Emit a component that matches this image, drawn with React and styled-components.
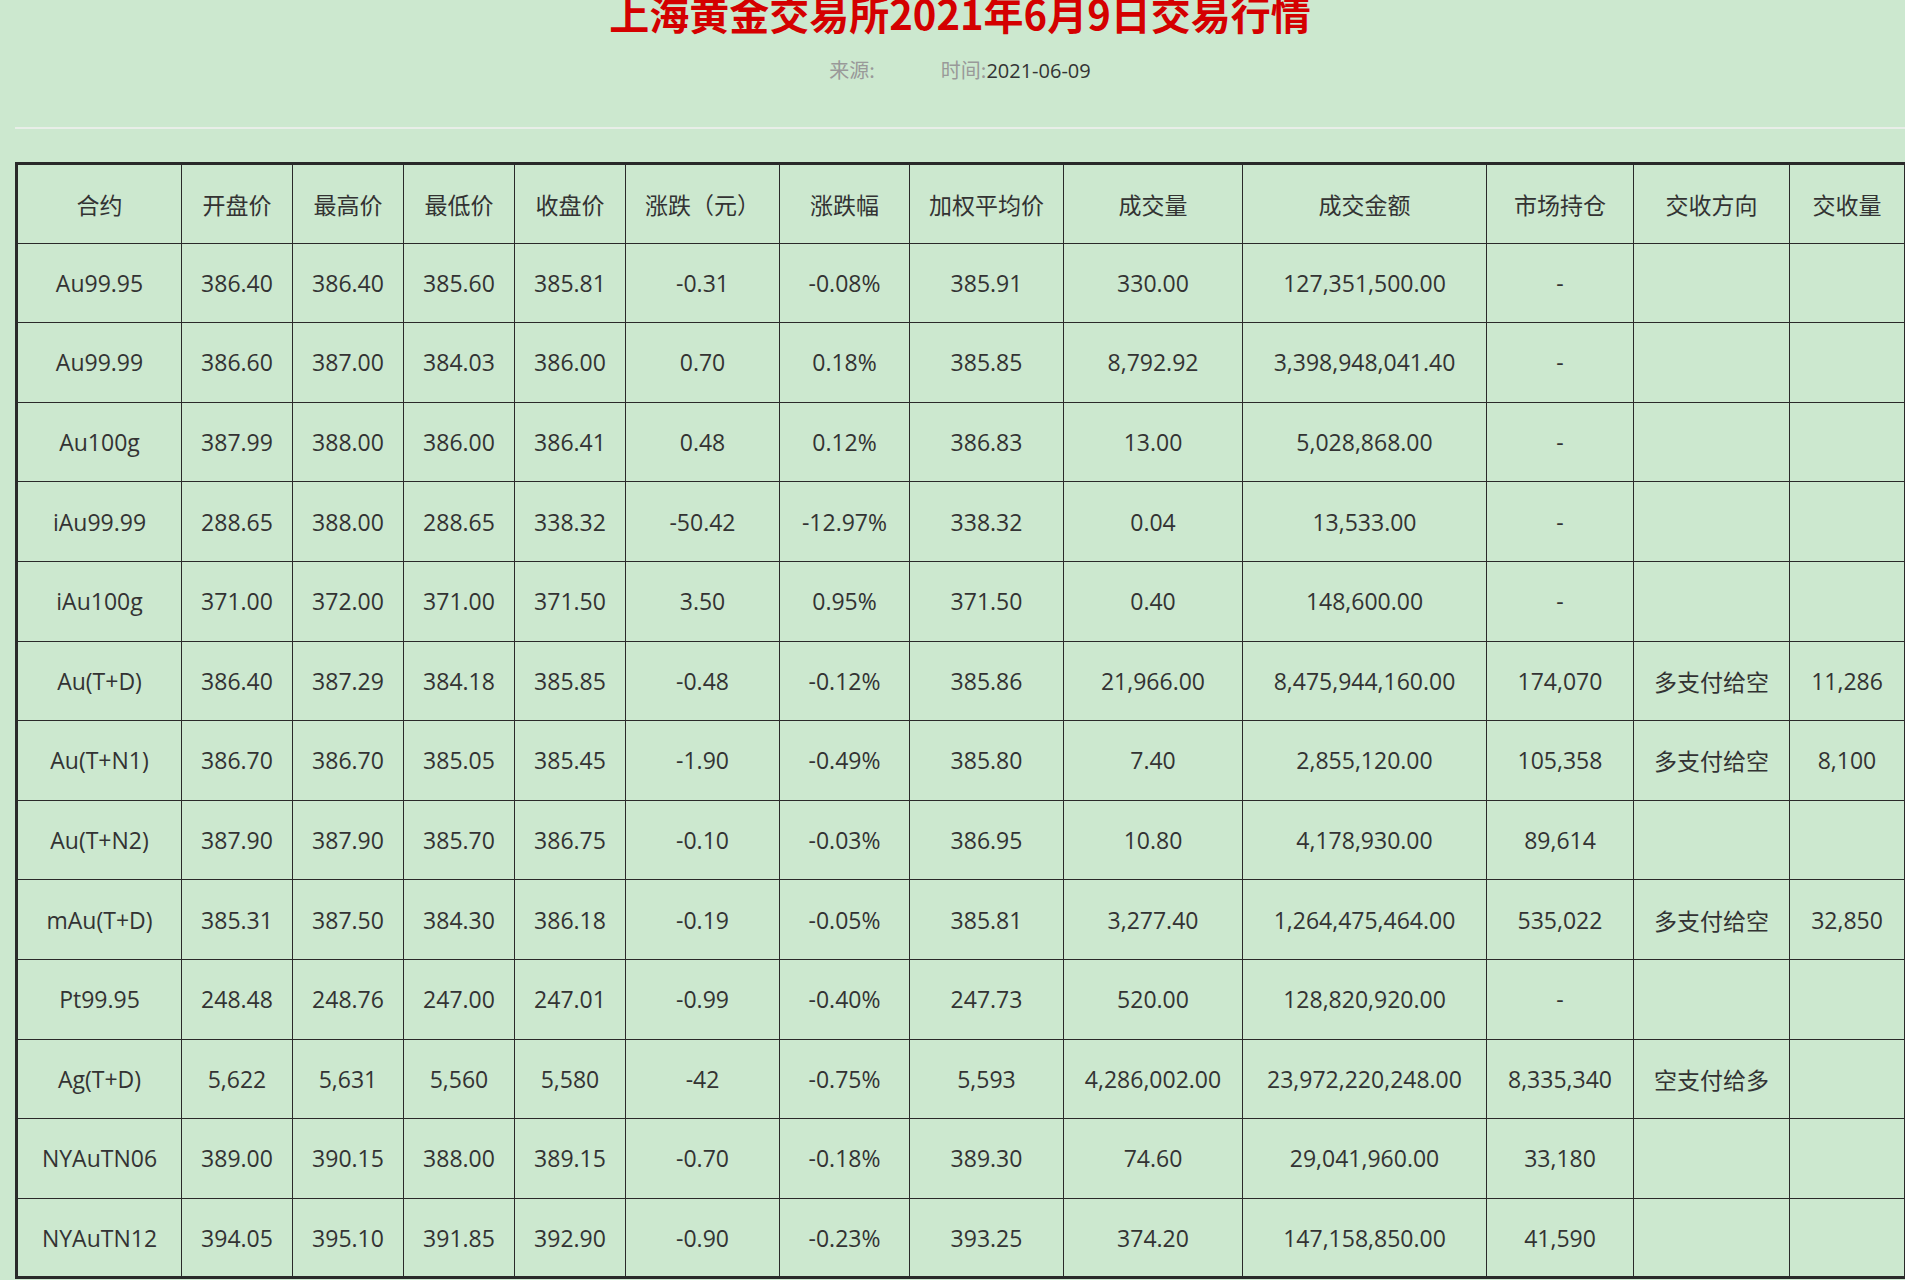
import React from "react";
import styled, { createGlobalStyle } from "styled-components";

const GlobalStyle = createGlobalStyle`
  html, body {
    margin: 0;
    padding: 0;
    overflow: hidden;
    background: #cce8cf;
  }
  body {
    font-family: "Open Sans", "Noto Sans CJK SC", sans-serif;
    color: #333;
  }
`;

const Page = styled.div`
  padding-left: 15px;
  background: #cce8cf;
  min-height: 1280px;
  box-sizing: border-box;
`;

const Title = styled.h1`
  margin: -7px 0 0;
  font-family: "Noto Sans CJK SC", sans-serif;
  font-size: 40px;
  line-height: 40px;
  font-weight: 700;
  color: #d40000;
  text-align: center;
`;

const Meta = styled.div`
  margin-top: 24px;
  display: flex;
  justify-content: center;
  gap: 66px;
  font-size: 20px;
  line-height: 26px;
`;

const Label = styled.span`
  font-family: "Noto Sans CJK SC", sans-serif;
  color: #999;
`;

const DateText = styled.span`
  font-family: "Open Sans", sans-serif;
  color: #333;
`;

const Rule = styled.div`
  margin-top: 43px;
  height: 2px;
  background: #e8eee8;
`;

const Table = styled.table`
  margin-top: 33px;
  width: 1889px;
  table-layout: fixed;
  border-collapse: collapse;
  border: 3px solid #2a2a2a;
  font-size: 23px;
  color: #333;
`;

const Row = styled.tr`
  height: 79.6px;
`;

const Cell = styled.td`
  border: 1px solid #2a2a2a;
  padding: 0;
  text-align: center;
  vertical-align: middle;
  white-space: nowrap;
  font-family: "Open Sans", "Noto Sans CJK SC", sans-serif;
`;

const HeadCell = styled(Cell).attrs({ as: "th" })`
  font-weight: 400;
  font-family: "Noto Sans CJK SC", sans-serif;
`;

const widths = [165, 111, 111, 111, 111, 154, 130, 154, 179, 244, 147, 156, 116];

const headers = [
  "合约", "开盘价", "最高价", "最低价", "收盘价", "涨跌（元）", "涨跌幅",
  "加权平均价", "成交量", "成交金额", "市场持仓", "交收方向", "交收量",
];

const rows = [
  ["Au99.95", "386.40", "386.40", "385.60", "385.81", "-0.31", "-0.08%", "385.91", "330.00", "127,351,500.00", "-", "", ""],
  ["Au99.99", "386.60", "387.00", "384.03", "386.00", "0.70", "0.18%", "385.85", "8,792.92", "3,398,948,041.40", "-", "", ""],
  ["Au100g", "387.99", "388.00", "386.00", "386.41", "0.48", "0.12%", "386.83", "13.00", "5,028,868.00", "-", "", ""],
  ["iAu99.99", "288.65", "388.00", "288.65", "338.32", "-50.42", "-12.97%", "338.32", "0.04", "13,533.00", "-", "", ""],
  ["iAu100g", "371.00", "372.00", "371.00", "371.50", "3.50", "0.95%", "371.50", "0.40", "148,600.00", "-", "", ""],
  ["Au(T+D)", "386.40", "387.29", "384.18", "385.85", "-0.48", "-0.12%", "385.86", "21,966.00", "8,475,944,160.00", "174,070", "多支付给空", "11,286"],
  ["Au(T+N1)", "386.70", "386.70", "385.05", "385.45", "-1.90", "-0.49%", "385.80", "7.40", "2,855,120.00", "105,358", "多支付给空", "8,100"],
  ["Au(T+N2)", "387.90", "387.90", "385.70", "386.75", "-0.10", "-0.03%", "386.95", "10.80", "4,178,930.00", "89,614", "", ""],
  ["mAu(T+D)", "385.31", "387.50", "384.30", "386.18", "-0.19", "-0.05%", "385.81", "3,277.40", "1,264,475,464.00", "535,022", "多支付给空", "32,850"],
  ["Pt99.95", "248.48", "248.76", "247.00", "247.01", "-0.99", "-0.40%", "247.73", "520.00", "128,820,920.00", "-", "", ""],
  ["Ag(T+D)", "5,622", "5,631", "5,560", "5,580", "-42", "-0.75%", "5,593", "4,286,002.00", "23,972,220,248.00", "8,335,340", "空支付给多", ""],
  ["NYAuTN06", "389.00", "390.15", "388.00", "389.15", "-0.70", "-0.18%", "389.30", "74.60", "29,041,960.00", "33,180", "", ""],
  ["NYAuTN12", "394.05", "395.10", "391.85", "392.90", "-0.90", "-0.23%", "393.25", "374.20", "147,158,850.00", "41,590", "", ""],
];

export default function App() {
  return (
    <>
      <GlobalStyle />
      <Page>
        <Title>上海黄金交易所2021年6月9日交易行情</Title>
        <Meta>
          <Label>来源:</Label>
          <span>
            <Label>时间:</Label>
            <DateText>2021-06-09</DateText>
          </span>
        </Meta>
        <Rule />
        <Table>
          <colgroup>
            {widths.map((w, i) => (
              <col key={i} style={{ width: w }} />
            ))}
          </colgroup>
          <thead>
            <Row>
              {headers.map((h) => (
                <HeadCell key={h}>{h}</HeadCell>
              ))}
            </Row>
          </thead>
          <tbody>
            {rows.map((r) => (
              <Row key={r[0]}>
                {r.map((c, i) => (
                  <Cell key={i}>{c}</Cell>
                ))}
              </Row>
            ))}
          </tbody>
        </Table>
      </Page>
    </>
  );
}
